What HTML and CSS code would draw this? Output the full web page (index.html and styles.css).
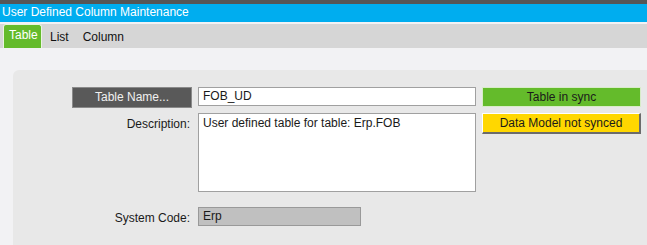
FILE: index.html
```html
<!DOCTYPE html>
<html>
<head>
<meta charset="utf-8">
<link rel="stylesheet" href="styles.css">
</head>
<body>
<div class="topline"></div>
<div class="titlebar">User Defined Column Maintenance</div>
<div class="tabs">
  <div class="tab active">Table</div>
  <div class="tab">List</div>
  <div class="tab">Column</div>
</div>
<div class="content">
  <div class="panel">
    <div class="row row1">
      <div class="btn">Table Name...</div>
      <div class="input">FOB_UD</div>
      <div class="status green">Table in sync</div>
    </div>
    <div class="row row2">
      <div class="label">Description:</div>
      <div class="textarea">User defined table for table: Erp.FOB</div>
      <div class="status yellow">Data Model not synced</div>
    </div>
    <div class="row row3">
      <div class="label">System Code:</div>
      <div class="input ro">Erp</div>
    </div>
  </div>
</div>
</body>
</html>
```
FILE: styles.css
```css
html, body { margin: 0; padding: 0; }
body {
  width: 647px; height: 245px; overflow: hidden;
  font-family: "Liberation Sans", Arial, sans-serif;
  font-size: 12px; color: #1a1a1a;
  background: #f2f2f4;
}
.topline { height: 4px; background: #565656; }
.titlebar {
  height: 18px; background: #00adef; color: #fff;
  line-height: 17px; padding-left: 2px; font-size: 12px;
  border-bottom: 2px solid #f2f2f4;
}
.tabs {
  height: 24px; background: #d6d6d6;
  display: flex; align-items: stretch;
  padding-left: 3px;
}
.tab {
  padding: 0 7px; line-height: 27px; color: #111;
}
.tab.active {
  background: #64bb2b; color: #fff;
  border: 1px solid #eaf5e0; border-bottom: none;
  border-radius: 3px 3px 0 0;
  padding: 0 5px; line-height: 21px;
  width: 27px;
  margin-right: 1px;
}
.content { padding: 22px 0 0 13px; }
.panel {
  background: #e8e8e8; border-radius: 6px 0 0 0;
  height: 158px; padding-top: 17px;
}
.row { display: flex; }
.btn {
  margin-left: 59px; width: 118px; height: 19px;
  background: #595959; border: 1px solid #8a8a8a;
  color: #f0f0f0; text-align: center; line-height: 19px;
}
.input {
  margin-left: 6px; width: 272px; height: 17px;
  background: #fff; border: 1px solid #a0a0a0;
  line-height: 17px; padding-left: 4px;
}
.row2 { margin-top: 5px; }
.label {
  width: 177px; text-align: right; margin-left: 0;
  line-height: 18px; padding-top: 2px;
}
.row2 .label { margin-right: 8px; }
.textarea {
  width: 272px; height: 75px; background: #fff;
  border: 1px solid #a0a0a0; padding-left: 4px; padding-top: 2px;
}
.status {
  margin-left: 6px; width: 157px; height: 18px;
  text-align: center; line-height: 18px; color: #1a1a1a;
}
.green { background: #64bb2b; border: 1px solid #d8ecc8; }
.yellow {
  background: #ffd700; height: 18px; width: 156px;
  border-top: 1px solid #fff; border-left: 1px solid #fff;
  border-right: 2px solid #6b6b6b; border-bottom: 2px solid #6b6b6b;
}
.row3 { margin-top: 15px; }
.row3 .label { margin-right: 8px; padding-top: 2px; }
.input.ro {
  margin-left: 0; width: 157px; background: #c0c0c0;
  border: 1px solid #999;
}
```
